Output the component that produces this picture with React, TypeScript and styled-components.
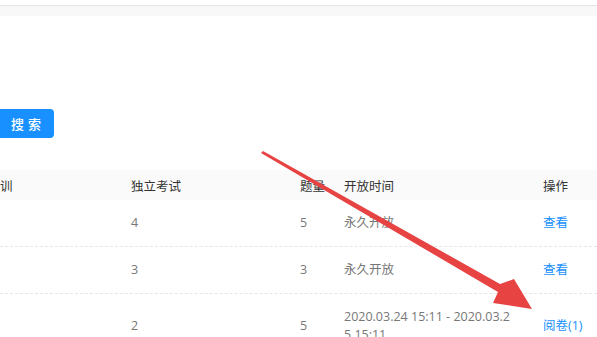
import React from "react";
import styled, { createGlobalStyle } from "styled-components";

const Global = createGlobalStyle`
  html, body { margin: 0; padding: 0; background: #fff; }
  body { font-family: "Open Sans", "Noto Sans CJK SC", sans-serif; overflow: hidden; }
`;

const Page = styled.div`
  position: relative;
  width: 597px;
  height: 337px;
  overflow: hidden;
  display: flex;
  flex-direction: column;
  & > * { flex-shrink: 0; }
`;

const TopBar = styled.div`
  margin-top: 5px;
  height: 10px;
  border-top: 1px solid #e4e4e4;
  background: #f8f8f8;
`;

const FilterRow = styled.div`
  margin-top: 93px;
  display: flex;
  align-items: center;
`;

const SearchButton = styled.button`
  width: 54px;
  height: 29px;
  border: none;
  border-radius: 0 4px 4px 0;
  background: #1890ff;
  color: #fff;
  font-family: "Noto Sans CJK SC", sans-serif;
  font-size: 13px;
  font-weight: 500;
  padding: 0;
  letter-spacing: 4px;
  text-indent: 2px;
`;

const Table = styled.div`
  margin-top: 32px;
  display: flex;
  flex-direction: column;
`;

const cols = "131px 169px 44px 199px 1fr";

const HeaderRow = styled.div`
  display: grid;
  grid-template-columns: ${cols};
  height: 30px;
  align-items: center;
  background: #fafafa;
  color: #333;
  font-size: 12.5px;
`;

const Row = styled.div`
  display: grid;
  grid-template-columns: ${cols};
  align-items: center;
  padding: 14px 0;
  border-bottom: 1px dashed #e6e6e6;
  color: #777;
  font-size: 12.5px;
  line-height: 18px;
`;

const Cell = styled.div<{ $wrap?: boolean }>`
  min-width: 0;
  padding-right: ${(p) => (p.$wrap ? "29px" : "8px")};
  word-break: break-all;
`;

const Link = styled.span`
  color: #1890ff;
  cursor: pointer;
`;

const ArrowSvg = styled.svg`
  position: absolute;
  left: 0;
  top: 0;
  pointer-events: none;
`;

const rows = [
  { a: "", b: "4", c: "5", d: "永久开放", op: "查看" },
  { a: "", b: "3", c: "3", d: "永久开放", op: "查看" },
  { a: "", b: "2", c: "5", d: "2020.03.24 15:11 - 2020.03.25 15:11", op: "阅卷(1)" },
];

export default function App() {
  return (
    <>
      <Global />
      <Page>
        <TopBar />
        <FilterRow>
          <SearchButton>搜索</SearchButton>
        </FilterRow>
        <Table>
          <HeaderRow>
            <Cell>训</Cell>
            <Cell>独立考试</Cell>
            <Cell>题量</Cell>
            <Cell>开放时间</Cell>
            <Cell>操作</Cell>
          </HeaderRow>
          {rows.map((r, i) => (
            <Row key={i}>
              <Cell>{r.a}</Cell>
              <Cell>{r.b}</Cell>
              <Cell>{r.c}</Cell>
              <Cell $wrap>{r.d}</Cell>
              <Cell>
                <Link>{r.op}</Link>
              </Cell>
            </Row>
          ))}
        </Table>
        <ArrowSvg width="597" height="337" viewBox="0 0 597 337">
          <polygon
            points="261,153 263,151 500,284 514,279 532,309 493,303 498,292"
            fill="#e84343"
          />
        </ArrowSvg>
      </Page>
    </>
  );
}
